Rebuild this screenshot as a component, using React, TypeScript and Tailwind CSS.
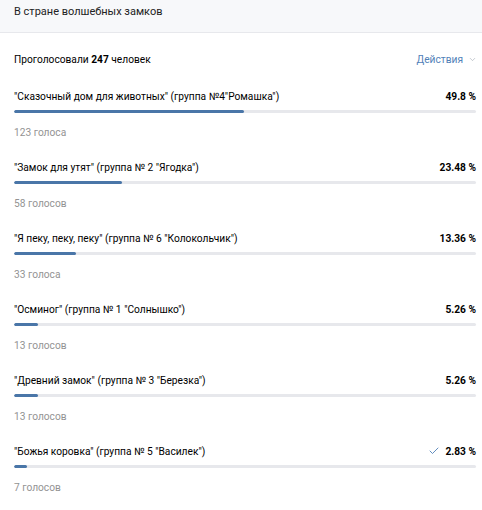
import { ChevronDown, Check } from 'lucide-react'

interface PollOption {
  label: string
  percent: string
  value: number
  votes: string
  mine?: boolean
}

const options: PollOption[] = [
  { label: '"Сказочный дом для животных" (группа №4"Ромашка")', percent: '49.8 %', value: 49.8, votes: '123 голоса' },
  { label: '"Замок для утят" (группа № 2 "Ягодка")', percent: '23.48 %', value: 23.48, votes: '58 голосов' },
  { label: '"Я пеку, пеку, пеку" (группа № 6 "Колокольчик")', percent: '13.36 %', value: 13.36, votes: '33 голоса' },
  { label: '"Осминог" (группа № 1 "Солнышко")', percent: '5.26 %', value: 5.26, votes: '13 голосов' },
  { label: '"Древний замок" (группа № 3 "Березка")', percent: '5.26 %', value: 5.26, votes: '13 голосов' },
  { label: '"Божья коровка" (группа № 5 "Василек")', percent: '2.83 %', value: 2.83, votes: '7 голосов', mine: true },
]

export default function App() {
  return (
    <div className="w-[482px] h-[510px] bg-white text-[10.2px] text-[#000] font-['Roboto',sans-serif]">
      {/* Header */}
      <div className="h-[33px] bg-[#f7f8fa] border-b border-[#e7e8ec] px-[14px] pt-[4px] text-[11px] leading-[16px] text-[#222]">
        В стране волшебных замков
      </div>

      {/* Summary */}
      <div className="flex items-center justify-between pl-[14px] pr-[5px] h-[53px]">
        <span>
          Проголосовали <b className="font-bold">247</b> человек
        </span>
        <button className="flex items-center gap-[5px] text-[#5181b8] text-[10.2px]">
          Действия
          <ChevronDown className="w-[9px] h-[9px] text-[#99a2ad]" strokeWidth={1.5} />
        </button>
      </div>

      {/* Options */}
      <div className="pl-[14px] pr-[6px] pt-[1px] flex flex-col gap-[16px]">
        {options.map((o) => (
          <div key={o.label} className="flex flex-col">
            <div className="flex items-center justify-between h-[19px]">
              <span>{o.label}</span>
              <span className="flex items-center gap-[5px] font-bold">
                {o.mine && <Check className="w-[12px] h-[12px] text-[#5181b8]" strokeWidth={1.8} />}
                {o.percent}
              </span>
            </div>
            <div className="mt-[4px] h-[3px] bg-[#e7e8ec] rounded-full overflow-hidden">
              <div className="h-full bg-[#4a76a8] rounded-full" style={{ width: `${o.value}%` }} />
            </div>
            <div className="mt-[11px] h-[18px] flex items-center text-[#939393]">{o.votes}</div>
          </div>
        ))}
      </div>
    </div>
  )
}
